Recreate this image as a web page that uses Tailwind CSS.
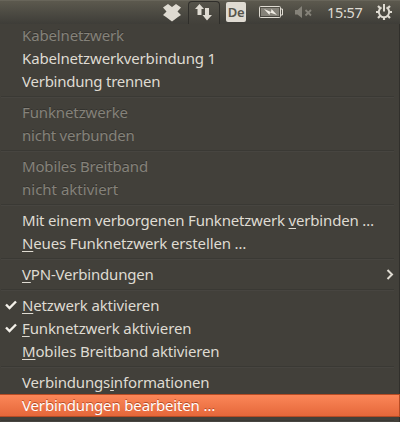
<!DOCTYPE html>
<html lang="de">
<head>
<meta charset="utf-8">
<title>Netzwerkmenü</title>
<script src="https://cdn.jsdelivr.net/npm/@tailwindcss/browser@4"></script>
</head>
<body class="w-[400px] h-[422px] overflow-hidden bg-[#42403a] font-['Noto_Sans','Open_Sans',sans-serif] text-[15px] text-[#dfdbd2]">
<div class="flex h-[422px] flex-col">
<header class="flex h-6 shrink-0 items-start border-t border-[#68655a] bg-linear-to-b from-[#5c594e] to-[#3e3d38] pl-[162px]">
  <svg class="mt-[2px] h-5 w-5 shrink-0" viewBox="0 0 20 20" fill="#dfdbd2"><path d="M6 1 10 4 14 1 19 4.500 15.500 8.500 19 12 16 14 10 18.500 4 14 1 12 4.500 8.500 1 4.500Z"/></svg>
  <div class="ml-[6px] flex h-[23px] w-8 shrink-0 justify-center rounded-t border border-b-0 border-[#2f2e2a] bg-linear-to-b from-[#55534a] to-[#42403a]">
    <svg class="h-[21px] w-[22px] shrink-0" viewBox="0 0 22 21" fill="#dfdbd2"><path d="M6.500 2 11 7H8.500V13H4.500V7H2ZM12 6H16V13H19L14 18.500 9.500 13H12Z"/></svg>
  </div>
  <div class="ml-[6px] mt-px flex h-5 w-5 shrink-0 items-center justify-center rounded-[2px] bg-[#dfdbd2] text-[13px] font-semibold leading-none tracking-[-0.3px] text-[#57554c]">De</div>
  <svg class="ml-[13px] mt-[4px] h-[14px] w-[25px] shrink-0" viewBox="0 0 25 14" fill="none"><rect x=".5" y="1.500" width="21" height="11" rx="1" stroke="#dfdbd2"/><rect x="2" y="3" width="18" height="8" fill="#858279"/><path d="M22 4H23.500V10H22" stroke="#dfdbd2"/><path d="M5 4 12 7 12.500 4 18 10 11 7.500 10.500 10Z" fill="#f0ece4"/></svg>
  <svg class="ml-[11px] mt-[5px] h-[14px] w-[18px] shrink-0" viewBox="0 0 18 14" fill="#858279"><path d="M0 4H2.500L7 0V12L2.500 8.500H0Z"/><path d="m10.500 4 5.500 5.500m0-5.500-5.500 5.500" stroke="#858279" stroke-width="1.800"/></svg>
  <time class="ml-[14px] w-[37px] shrink-0 whitespace-nowrap text-[14.500px] leading-[22px] tracking-[-0.3px]">15:57</time>
  <svg class="ml-[11px] mt-[2px] h-[18px] w-[18px] shrink-0" viewBox="0 0 18 18" fill="none" stroke="#dfdbd2"><path d="M6.500 4.400A5.200 5.200 0 1 0 11.500 4.400" stroke-width="2"/><path d="M9 1V8.500" stroke-width="2"/><path d="m3 3 2 2m8 0 2-2M1 9h2m12 0h2M3 15l2-2m8 0 2 2M9 15v2" stroke-width="2.200"/></svg>
</header>
<nav class="flex grow flex-col border-r border-[#302f2b] leading-[23px] tracking-[-0.16px] whitespace-nowrap [&_u]:decoration-1 [&_u]:underline-offset-2">
  <p class="h-[23px] pl-[22px] tracking-[-0.15px] text-[#85827a] text-shadow-[0_-1px_0_#33322e]">Kabelnetzwerk</p>
  <p class="h-[23px] pl-[22px]">Kabelnetzwerkverbindung 1</p>
  <p class="h-[23px] pl-[22px] tracking-[-0.24px]">Verbindung trennen</p>
  <hr class="my-[3px] mr-[5px] ml-px h-[2px] border-t-[#3a3934] border-b border-b-[#474540]">
  <p class="h-[23px] pl-[22px] tracking-[-0.12px] text-[#85827a] text-shadow-[0_-1px_0_#33322e]">Funknetzwerke</p>
  <p class="h-[23px] pl-[22px] tracking-[-0.22px] text-[#85827a] text-shadow-[0_-1px_0_#33322e]">nicht verbunden</p>
  <hr class="my-[3px] mr-[5px] ml-px h-[2px] border-t-[#3a3934] border-b border-b-[#474540]">
  <p class="h-[23px] pl-[22px] text-[#85827a] text-shadow-[0_-1px_0_#33322e]">Mobiles Breitband</p>
  <p class="h-[23px] pl-[22px] tracking-[0px] text-[#85827a] text-shadow-[0_-1px_0_#33322e]">nicht aktiviert</p>
  <hr class="my-[3px] mr-[5px] ml-px h-[2px] border-t-[#3a3934] border-b border-b-[#474540]">
  <p class="h-[23px] pl-[22px] tracking-[-0.18px]">Mit einem verborgenen Funknetzwerk <u>v</u>erbinden …</p>
  <p class="h-[23px] pl-[22px] tracking-[-0.14px]"><u>N</u>eues Funknetzwerk erstellen …</p>
  <hr class="my-[3px] mr-[5px] ml-px h-[2px] border-t-[#3a3934] border-b border-b-[#474540]">
  <div class="flex h-[23px] items-center justify-between pr-[5px] pl-[22px] tracking-[-0.2px]"><span><u>V</u>PN-Verbindungen</span>
    <svg class="h-3 w-2" viewBox="0 0 8 12" fill="none" stroke="#dfdbd2" stroke-width="2"><path d="M1.500 1 6 5.500 1.500 10"/></svg></div>
  <hr class="my-[3px] mr-[5px] ml-px h-[2px] border-t-[#3a3934] border-b border-b-[#474540]">
  <div class="flex h-[23px] items-center gap-[5px] pl-[5px] tracking-[-0.14px]"><svg class="h-3 w-3" viewBox="0 0 12 12" fill="none" stroke="#f4f1ea" stroke-width="2.400"><path d="M1 4.500 4.500 8 11 1.500"/></svg><span><u>N</u>etzwerk aktivieren</span></div>
  <div class="flex h-[23px] items-center gap-[5px] pl-[5px] tracking-[-0.12px]"><svg class="h-3 w-3" viewBox="0 0 12 12" fill="none" stroke="#f4f1ea" stroke-width="2.400"><path d="M1 4.500 4.500 8 11 1.500"/></svg><span><u>F</u>unknetzwerk aktivieren</span></div>
  <p class="h-[23px] pl-[22px]"><u>M</u>obiles Breitband aktivieren</p>
  <hr class="my-[3px] mr-[5px] ml-px h-[2px] border-t-[#3a3934] border-b border-b-[#474540]">
  <p class="h-[23px] pl-[22px]">Verbindungs<u>i</u>nformationen</p>
  <p class="-mr-px h-[23px] border border-l-0 border-[#b64c25] bg-linear-to-b from-[#fb8758] to-[#e5673a] pl-[22px] leading-[21px] text-white text-shadow-[0_-1px_0_#b64c25]">Verbindungen bearbeiten …</p>
  <hr class="my-[3px] mr-[5px] ml-px h-[2px] border-t-[#3a3934] border-b border-b-[#474540]">
</nav>
</div>
</body>
</html>
